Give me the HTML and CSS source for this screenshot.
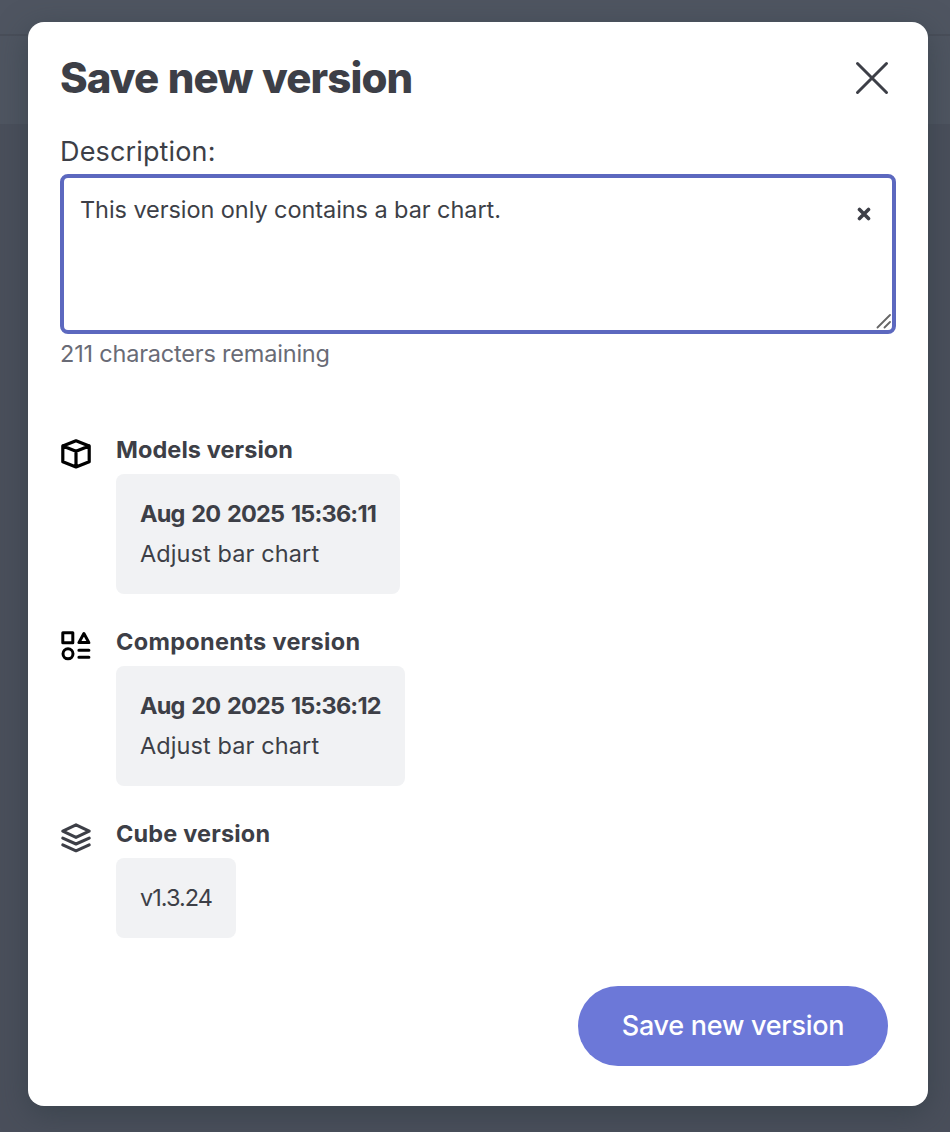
FILE: index.html
```html
<!DOCTYPE html>
<html lang="en">
<head>
<meta charset="utf-8">
<title>Save new version</title>
<link rel="stylesheet" href="styles.css">
</head>
<body>
<main class="modal" role="dialog">
  <header class="header">
    <h1 class="title">Save new version</h1>
    <svg class="close" width="36" height="36" viewBox="0 0 36 36"><path d="M3.5 3.5L32.5 32.5M32.5 3.5L3.5 32.5"/></svg>
  </header>
  <div class="label">Description:</div>
  <div class="field">
    <span class="field-text">This version only contains a bar chart.</span>
    <svg class="clear" width="14" height="14" viewBox="0 0 14 14"><path d="M2.5 2.5L11.5 11.5M11.5 2.5L2.5 11.5"/></svg>
    <svg class="grip" width="16" height="16" viewBox="0 0 16 16"><path d="M2.5 14.5L15 2M9.5 14.5L15 9"/></svg>
  </div>
  <div class="hint">211 characters remaining</div>
  <section class="item">
    <svg class="icon black" width="32" height="32" viewBox="0 0 32 32"><path d="M16 2.8L29.2 8V23.8L16 29L2.8 23.8V8ZM2.8 8L16 13.2L29.2 8M16 13.2V29"/></svg>
    <div class="content">
      <h2 class="name models">Models version</h2>
      <div class="card card-models"><strong class="date">Aug 20 2025 15:36:11</strong><span class="note">Adjust bar chart</span></div>
    </div>
  </section>
  <section class="item">
    <svg class="icon black shapes" width="32" height="32" viewBox="0 0 32 32"><path d="M2.8 2.8H12.8V12.8H2.8ZM23.9 3.5L28.9 12.6H18.9Z"/><circle cx="8" cy="23.8" r="5"/><path d="M18.9 20.2H28.9M18.9 27.3H28.9"/></svg>
    <div class="content">
      <h2 class="name components">Components version</h2>
      <div class="card card-components"><strong class="date">Aug 20 2025 15:36:12</strong><span class="note">Adjust bar chart</span></div>
    </div>
  </section>
  <section class="item">
    <svg class="icon" width="32" height="32" viewBox="0 0 32 32"><path d="M16 2.9L29.2 9.2L16 15.4L2.8 9.2ZM2.8 16.2L16 22L29.2 16.2M2.8 22.8L16 28.8L29.2 22.8"/></svg>
    <div class="content">
      <h2 class="name cube">Cube version</h2>
      <div class="card card-cube"><span class="version">v1.3.24</span></div>
    </div>
  </section>
  <footer class="footer"><button class="save">Save new version</button></footer>
</main>
</body>
</html>
```
FILE: styles.css
```css
* { box-sizing: border-box; }
body {
  margin: 0;
  padding: 22px 22px 26px 28px;
  height: 1132px;
  overflow: hidden;
  font-family: Inter, "Liberation Sans", sans-serif;
  color: #3d3f47;
  background: linear-gradient(#4f5561 0 34px, #494e59 34px 36px, #4f5561 36px 124px, #4a4f5b 124px);
}
.modal {
  width: 900px;
  height: 1084px;
  padding: 28px 32px 40px;
  border-radius: 16px;
  background: #fff;
  box-shadow: 0 8px 30px rgba(45, 58, 66, .55);
}
.header { display: flex; align-items: center; justify-content: space-between; height: 56px; }
.title { margin: 0; padding-bottom: 1px; font-size: 42px; line-height: 55px; font-weight: 800; letter-spacing: -.9px; word-spacing: 1px; white-space: nowrap; }
svg { fill: none; stroke: #3d3f47; stroke-linecap: round; stroke-linejoin: round; flex: none; }
.close { margin-right: 6px; stroke-width: 3; }
.label { margin-top: 26px; height: 42px; line-height: 40px; font-size: 27px; letter-spacing: .15px; }
.field {
  position: relative;
  width: 836px;
  height: 160px;
  padding: 16px;
  border: 4px solid #5c68bf;
  border-radius: 8px;
  font-size: 23.5px;
  line-height: 32px;
  letter-spacing: -.07px;
}
.field-text { display: block; }
.clear { position: absolute; right: 21px; top: 29px; stroke-width: 3.6; }
.grip { position: absolute; right: 1px; bottom: 1px; stroke: #666; stroke-width: 1.8; }
.hint { height: 40px; line-height: 40px; font-size: 23.5px; letter-spacing: -.2px; color: #696b76; }
.item { display: flex; gap: 24px; margin-top: 32px; }
.hint + .item { margin-top: 60px; }
.icon { margin-top: 4px; stroke-width: 3.1; }
.black { stroke: #000; stroke-width: 3.2; }
.shapes { stroke-width: 3; }
.name { margin: 0; height: 40px; line-height: 32px; font-size: 23.5px; font-weight: 700; white-space: nowrap; }
.models { letter-spacing: .07px; }
.components { letter-spacing: .32px; }
.cube { letter-spacing: .17px; }
.card {
  display: flex;
  flex-direction: column;
  padding: 20px 24px;
  border-radius: 8px;
  background: #f1f2f4;
  font-size: 23.5px;
  line-height: 40px;
  white-space: nowrap;
}
.card-models { width: 284px; }
.card-components { width: 289px; }
.card-cube { width: 120px; }
.date { letter-spacing: -.8px; word-spacing: 1.9px; }
.note { letter-spacing: .1px; }
.version { letter-spacing: -1px; }
.footer { display: flex; justify-content: flex-end; margin: 48px 8px 0 0; }
.save {
  width: 310px;
  height: 80px;
  padding: 0 0 2px;
  border: 0;
  border-radius: 40px;
  color: #fff;
  background: #6c78d8;
  font: 500 27px Inter, "Liberation Sans", sans-serif;
  letter-spacing: -.27px;
}
```
